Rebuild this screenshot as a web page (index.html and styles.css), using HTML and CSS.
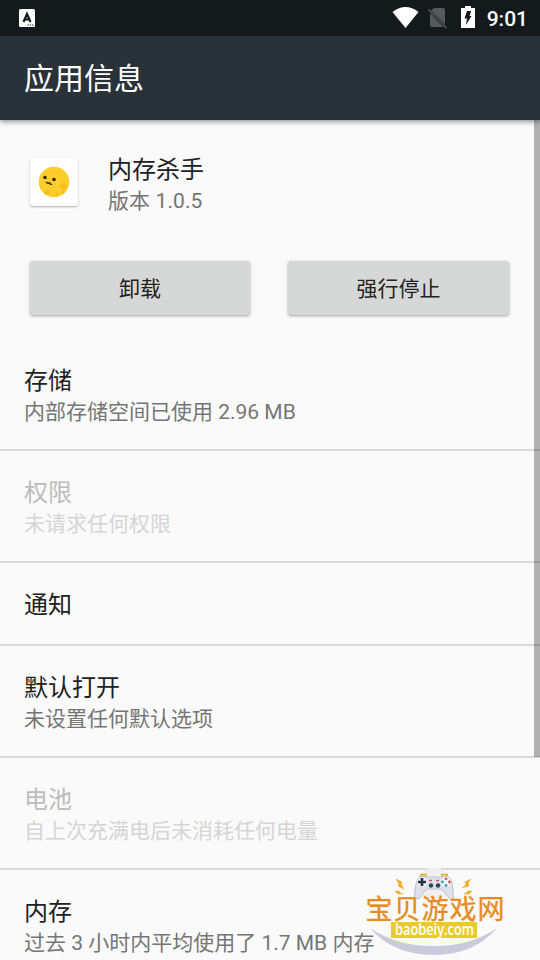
FILE: index.html
```
<!DOCTYPE html>
<html lang="zh-CN">
<head>
<meta charset="utf-8">
<title>应用信息</title>
<link rel="stylesheet" href="styles.css">
</head>
<body>
<div class="screen">
  <div class="statusbar">
    <svg class="ime" width="16" height="18" viewBox="0 0 16 18"><rect width="16" height="18" rx="1.5" fill="#fff"/><path d="M4.500 13L8 5L11.500 13M5.800 10.500H10.200" fill="none" stroke="#14191c" stroke-width="2.200"/><path d="M8.500 16H15" stroke="#14191c" stroke-width="1.200" stroke-dasharray="1.300 1"/></svg>
    <svg class="icons" width="90" height="24" viewBox="390 5 90 24">
      <path d="M392.500 12Q405.500 2 418.500 12L405.500 28Z" fill="#fff"/>
      <path d="M434 8H443Q445 8 445 10V24.500L431 10.500ZM430 13L443.500 27H432Q430 27 430 25Z" fill="#55595b"/>
      <path d="M428.500 9.500L446.500 28" stroke="#55595b" stroke-width="1.500"/>
      <path d="M461 8H465V6H471V8H475V28H461Z" fill="#fff"/>
      <path d="M467 11H471L469.500 16H471.500L466 25L467 18.500H464.500Z" fill="#14191c"/>
    </svg>
    <span class="clock">9:01</span>
  </div>
  <header class="toolbar"><h1>应用信息</h1></header>
  <main class="content">
    <section class="app">
      <div class="app-icon">
        <svg width="32" height="32" viewBox="0 0 32 32"><circle cx="16" cy="16" r="15.300" fill="#fdce2b"/><circle cx="25.500" cy="20" r="3.300" fill="#f7bd20"/><circle cx="9" cy="26" r="2.500" fill="#f7bd20"/><circle cx="19" cy="28" r="1.500" fill="#f7bd20"/><circle cx="25" cy="26" r="1.700" fill="#f7bd20"/><circle cx="7" cy="11.500" r="1.800" fill="#30270e"/><circle cx="16" cy="13.500" r="1.800" fill="#30270e"/><path d="M8 16Q10 18 12.500 17M11.500 16Q12 19.500 14 18" fill="none" stroke="#30270e" stroke-width="1.200"/></svg>
      </div>
      <div><div class="name">内存杀手</div><div class="sub version">版本 1.0.5</div></div>
    </section>
    <div class="actions"><button>卸载</button><button>强行停止</button></div>
    <div class="list">
      <div class="item"><div class="name">存储</div><div class="sub">内部存储空间已使用 2.96 MB</div></div>
      <div class="item disabled"><div class="name">权限</div><div class="sub">未请求任何权限</div></div>
      <div class="item single"><div class="name">通知</div></div>
      <div class="item"><div class="name">默认打开</div><div class="sub">未设置任何默认选项</div></div>
      <div class="item disabled"><div class="name">电池</div><div class="sub">自上次充满电后未消耗任何电量</div></div>
      <div class="item"><div class="name">内存</div><div class="sub">过去 3 小时内平均使用了 1.7 MB 内存</div></div>
    </div>
  </main>
  <div class="scrollbar"></div>
  <svg class="watermark" width="190" height="100" viewBox="0 0 190 100">
    <circle cx="84" cy="24" r="16.500" fill="#f0f0f0"/>
    <path d="M20 68Q46 86 84 86Q121 86 147 68Q124 95 84 95Q43 95 20 68Z" fill="#c9cbdc"/>
    <path d="M71 16.500V14.500H76V16.500M92 16.500V14.500H97V16.500" fill="none" stroke="#e9a52d" stroke-width="1.700"/>
    <path d="M69 17Q73 15 77 17H91Q96 15 100 18Q103 22 103.500 39Q100 41 96 34Q94 30 90 29H78Q74 30 71 37Q68 41 64.500 37Q65 22 69 17Z" fill="#dfe0e9" stroke="#b4b7c6" stroke-width=".8"/>
    <circle cx="72" cy="22" r="4.800" fill="#f5f5fa"/><circle cx="96" cy="22" r="5" fill="#f7f7fb"/>
    <path d="M72 18V26M68 22H76" stroke="#253547" stroke-width="2.700"/>
    <circle cx="81" cy="25.500" r="2.200" fill="#294354"/><circle cx="88" cy="25.500" r="2.200" fill="#294354"/>
    <path d="M79 20.500H82M86 20.500H89" stroke="#e34b54" stroke-width="1.400"/>
    <circle cx="96" cy="18.800" r="1.400" fill="#e34b54"/><circle cx="92.500" cy="22" r="1.400" fill="#2aa3c5"/><circle cx="99.500" cy="22" r="1.400" fill="#e34b54"/><circle cx="96" cy="25.500" r="1.400" fill="#2aa3c5"/>
    <path d="M46 19L52 22L51 24L54 29L48 26L49 24ZM121 19L115 22L116 25L112 28L119 26L118 23ZM45 31L49 31L50 33L53 34L48 34ZM122 31L118 31L116 33L114 34L119 34Z" fill="#f5aa20" stroke="#f5aa20" stroke-width=".5"/>
    <text class="mark-cn" x="15.500" y="59" textLength="139" lengthAdjust="spacing">宝贝游戏网</text>
    <rect x="41" y="62" width="86" height="16" fill="#e9cc29"/>
    <text class="mark-url" x="45" y="74.500" textLength="79" lengthAdjust="spacingAndGlyphs">baobeiy.com</text>
  </svg>
</div>
</body>
</html>
```
FILE: styles.css
```
* { box-sizing: border-box; }
body { margin: 0; font-family: Roboto, "Noto Sans CJK SC", sans-serif; color: #212121; background: #fafafa; }
.screen { position: relative; width: 540px; height: 960px; overflow: hidden; background: #fafafa; }
.statusbar { display: flex; align-items: center; height: 36px; padding: 0 12px 0 19px; background: #14191c; }
.icons { margin: -2px 1px 0 auto; }
.clock { margin-left: 6px; padding-top: 1px; font-size: 21px; font-weight: 500; line-height: 36px; color: #fff; }
.toolbar { position: relative; display: flex; align-items: center; height: 84px; padding: 2px 0 0 24px; background: #283238; box-shadow: 0 2px 5px rgba(0,0,0,.4); }
h1 { margin: 0; font-size: 30px; font-weight: 400; line-height: 40px; color: #fff; }
.app { display: flex; height: 141px; padding: 34px 30px 0; }
.app-icon { display: flex; align-items: center; justify-content: center; width: 48px; height: 48px; margin: 4px 30px 0 0; background: #fff; border-radius: 3px; box-shadow: 0 1px 2px rgba(0,0,0,.3); }
.name { height: 32px; font-size: 24px; line-height: 32px; white-space: nowrap; }
.sub { height: 31px; font-size: 21px; line-height: 31px; color: #757575; white-space: nowrap; }
.version { letter-spacing: .1px; }
.actions { display: grid; grid-template-columns: 220px 221px; gap: 38px; height: 78px; padding: 0 30px; }
button { height: 54px; padding: 0 0 2px; border: 0; border-radius: 3px; background: #d6d8d7; color: #212121; font: 400 21px "Noto Sans CJK SC", sans-serif; box-shadow: 0 1px 3px rgba(0,0,0,.35); }
.item { height: 112px; padding: 26px 24px 0; border-bottom: 2px solid #dadada; }
.item.single { height: 83px; }
.disabled .name { color: #bcbcbc; }
.disabled .sub { color: #d5d5d5; }
.scrollbar { position: absolute; top: 120px; right: 0; width: 6px; height: 637px; background: rgba(0,0,0,.29); }
.watermark { position: absolute; left: 350px; top: 860px; }
.mark-cn { font: 400 27px "Noto Sans CJK SC", sans-serif; fill: #e78b20; stroke: #e78b20; stroke-width: .3px; }
.mark-url { font: 600 15.5px "Open Sans", sans-serif; fill: #fff; }
```
